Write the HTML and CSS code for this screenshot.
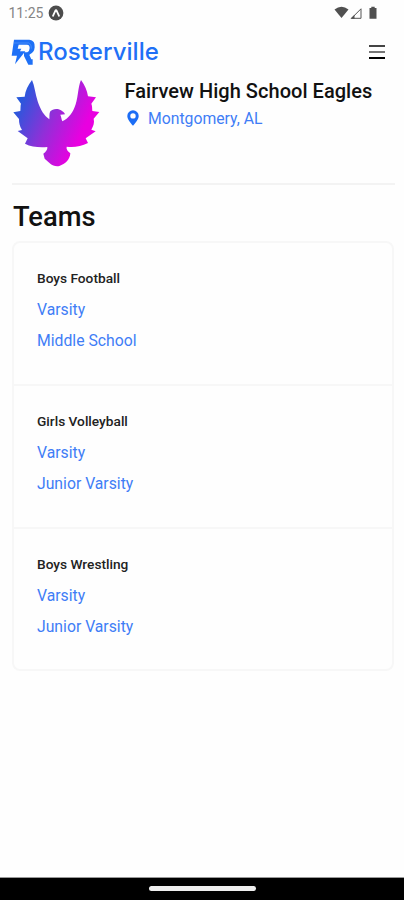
FILE: index.html
```html
<!DOCTYPE html>
<html lang="en">
<head>
<meta charset="utf-8">
<title>Rosterville</title>
<link rel="stylesheet" href="styles.css">
</head>
<body>
<div class="status">
  <span class="time">11:25</span>
  <svg class="app-icon" viewBox="0 0 16 16"><circle cx="8" cy="8" r="7.4" fill="#4c4c4c"/><path d="M5 10.800 7.300 5.800Q8 4.600 8.700 5.800L11 10.800" fill="none" stroke="#fff" stroke-width="1.8" stroke-linecap="round"/></svg>
  <svg class="signals" viewBox="0 0 46 14"><path d="M.5 3.400Q7.500-1.800 14.500 3.400L7.500 12Z" fill="#505050"/><path d="M17.500 12.300 27 2.800V12.300Z" fill="none" stroke="#555" stroke-width="1"/><path d="M16.500 12.800 20.500 8.800V12.800Z" fill="#505050"/><path d="M35.500 2H37.300V.7H40.700V2H42.500V12.800H35.500Z" fill="#505050"/></svg>
</div>
<header class="header">
  <svg class="logo" viewBox="0 0 75 78"><path d="M9 2H55Q73 4 71 25Q70 40 57 46L55 48 61 61H65V77H52L39 51V40H49Q56 36 56 27Q56 17 48 17H23L20 29H31L27 37H43L12 76 18 50H2Z" fill="#1e70f6"/><path d="M8 12H53Q63 17 61 29" fill="none" stroke="#6da5fb" stroke-width="1.5"/></svg>
  <span class="brand">Rosterville</span>
  <span class="menu"><i></i><i></i><i></i></span>
</header>
<main class="main">
  <section class="school">
    <svg class="eagle" viewBox="36 24 270 270">
      <defs><linearGradient id="wing" gradientUnits="userSpaceOnUse" x1="55" y1="100" x2="245" y2="190"><stop offset="0" stop-color="#2659dc"/><stop offset=".5" stop-color="#8f30d8"/><stop offset="1" stop-color="#e900e0"/></linearGradient></defs>
      <path fill="url(#wing)" d="M96 30C104 48 106 72 113 94C121 119 133 138 148 148C149 140 147 130 151 124C157 116 173 114 183 121C189 125 193 128 195 133L181 134C184 141 184 147 187 154C207 145 220 126 227 103C235 78 234 50 243 30C255 47 261 61 264 79L288 82L274 101C277 108 276 115 277 123L298 126L281 146C284 158 280 168 274 179L287 184L257 205L264 219C243 230 222 232 200 230C198 237 203 244 211 250C210 269 196 282 178 288C168 290 157 287 151 281L134 266L130 251C138 245 143 239 142 231C118 233 94 231 75 221L83 205L53 183L66 180C59 169 57 159 57 147L40 127L61 123C62 115 61 107 63 101L49 82L74 80C76 62 84 46 96 30Z"/>
    </svg>
    <div class="info">
      <h1>Fairvew High School Eagles</h1>
      <div class="place"><svg class="pin" viewBox="0 0 12 16"><path fill="#1c6df5" fill-rule="evenodd" d="M6 .3A5.700 5.700 0 0 0 .3 6C.3 9 3.500 13 6 15.700 8.500 13 11.700 9 11.700 6A5.700 5.700 0 0 0 6 .3ZM6 3.200A2.700 2.700 0 1 1 6 8.600 2.700 2.700 0 0 1 6 3.200Z"/></svg><a>Montgomery, AL</a></div>
    </div>
  </section>
  <h2>Teams</h2>
  <div class="teams">
    <section class="team"><h3>Boys Football</h3><a>Varsity</a><a class="second">Middle School</a></section>
    <section class="team"><h3>Girls Volleyball</h3><a>Varsity</a><a class="second">Junior Varsity</a></section>
    <section class="team"><h3>Boys Wrestling</h3><a>Varsity</a><a class="second">Junior Varsity</a></section>
  </div>
</main>
<footer class="nav"><span class="handle"></span></footer>
</body>
</html>
```
FILE: styles.css
```css
* { box-sizing: border-box; }
body { margin: 0; width: 404px; height: 900px; overflow: hidden; display: flex; flex-direction: column; background: #fefefe; font-family: Roboto, sans-serif; color: #111; }
h1, h2, h3 { margin: 0; font-weight: 500; white-space: nowrap; }
a { color: #3f7df6; }
.status { height: 26px; flex: none; display: flex; align-items: center; padding: 0 24px 0 8.5px; }
.time { font-size: 14px; line-height: 26px; color: #858585; }
.app-icon { width: 16px; height: 16px; margin-left: 4.5px; margin-top: -1px; }
.signals { width: 46px; height: 14px; margin-left: auto; margin-top: -1px; }
.header { height: 53px; flex: none; display: flex; align-items: center; padding: 0 19px 2px 11px; }
.logo { width: 25px; height: 26px; }
.brand { font: 500 24px/30px Inter, sans-serif; color: #1f70f6; margin-left: 2px; letter-spacing: .05px; }
.menu { margin-left: auto; width: 16px; height: 14px; display: flex; flex-direction: column; justify-content: space-between; }
.menu i { height: 2px; background: #444; }
.menu i:nth-child(2) { background: #777; }
.menu i:nth-child(3) { background: #000; }
.main { flex: 1; padding: 0 9px 0 12px; }
.school { height: 106px; display: flex; border-bottom: 2px solid #f3f3f3; }
.eagle { width: 90px; height: 90px; flex: none; margin-top: -1px; }
.info { padding-left: 22.5px; }
.info h1 { font-size: 20px; line-height: 24px; letter-spacing: .04px; }
.place { display: flex; align-items: center; height: 20px; margin-top: 5px; font-size: 15.75px; }
.place a { padding-top: 1px; }
.pin { width: 12px; height: 16px; margin: 0 9.5px 0 2px; }
.main h2 { font-size: 27.3px; line-height: 34px; margin-top: 15px; padding-left: 1px; }
.teams { width: 382px; margin-top: 7px; border: 2px solid #f7f7f7; border-radius: 8px; }
.team { height: 143px; padding: 27px 23px 0; border-bottom: 2px solid #f7f7f7; }
.team:last-child { height: 140px; border: 0; }
.team h3 { font-size: 13.7px; line-height: 17px; color: #222; }
.team a { display: block; font-size: 15.75px; line-height: 20px; margin-top: 13px; }
.team a.second { margin-top: 11px; }
.nav { height: 23px; flex: none; background: #000; border-top: 1px solid #999; display: flex; justify-content: center; padding-top: 8px; }
.handle { width: 107px; height: 5px; border-radius: 3px; background: #eee; }
```
